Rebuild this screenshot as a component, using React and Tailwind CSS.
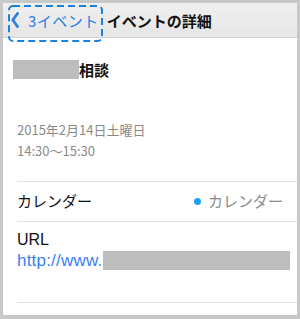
export default function App() {
  const jp = { fontFamily: '"Noto Sans CJK JP", "Liberation Sans", sans-serif' }
  const latin = { fontFamily: '"Liberation Sans", sans-serif' }
  return (
    <div className="w-[300px] h-[319px] bg-[#c8c8c8] pt-[3px] pl-[3px] pr-[3px] pb-[4px]" style={jp}>
      <div className="h-full bg-white flex flex-col">
        <div className="relative h-[35px] shrink-0 bg-gradient-to-b from-[#f0f0f0] to-[#e6e6e6] border-b border-[#d2d2d2] flex items-center pl-[8px]">
          <svg width="8" height="16" viewBox="0 0 8 16" className="shrink-0">
            <path d="M6.5 1.5 L1.8 8 L6.5 14.5" fill="none" stroke="#2a7fe6" strokeWidth="2.8" strokeLinecap="round" strokeLinejoin="round" />
          </svg>
          <span className="ml-[9px] text-[15px] leading-none text-[#2a7fe6] tracking-[0.5px]">3イベント</span>
          <span className="ml-[8px] text-[15px] leading-none font-bold text-[#111]">イベントの詳細</span>
          <svg className="absolute left-[5px] top-[2px]" width="95" height="37" viewBox="0 0 95 37">
            <rect x="1" y="1" width="93" height="35" rx="4" fill="none" stroke="#1a82de" strokeWidth="2" strokeDasharray="7 4" />
          </svg>
        </div>

        <div className="pl-[10px] pt-[22px] h-[143px] shrink-0">
          <div className="flex items-center">
            <div className="w-[66px] h-[19px] bg-[#bdbdbd]" />
            <span className="text-[15px] leading-none font-bold text-[#111]">相談</span>
          </div>
          <div className="mt-[40px] pl-[4px] text-[13px] leading-[21px] text-[#8a8a8a]">
            <div>2015年2月14日土曜日</div>
            <div>14:30〜15:30</div>
          </div>
        </div>

        <div className="ml-[14px] border-t border-[#e2e2e2] h-[40px] shrink-0 flex items-center justify-between pr-[14px]">
          <span className="text-[15px] text-[#111]">カレンダー</span>
          <span className="flex items-center text-[15px] text-[#8a8a8a]">
            <span className="w-[7px] h-[7px] rounded-full bg-[#1ea0f5] mr-[7px]" />
            カレンダー
          </span>
        </div>

        <div className="ml-[14px] border-t border-[#e2e2e2] h-[82px] shrink-0 pt-[8px] border-b">
          <div className="text-[16px] leading-[20px] text-[#111]" style={latin}>URL</div>
          <div className="flex items-center mt-[1px]">
            <span className="text-[17px] leading-[19px] text-[#3a80f0] tracking-[0.2px]" style={latin}>http://www.</span>
            <div className="ml-[1px] w-[187px] h-[19px] bg-[#bdbdbd]" />
          </div>
        </div>
      </div>
    </div>
  )
}
